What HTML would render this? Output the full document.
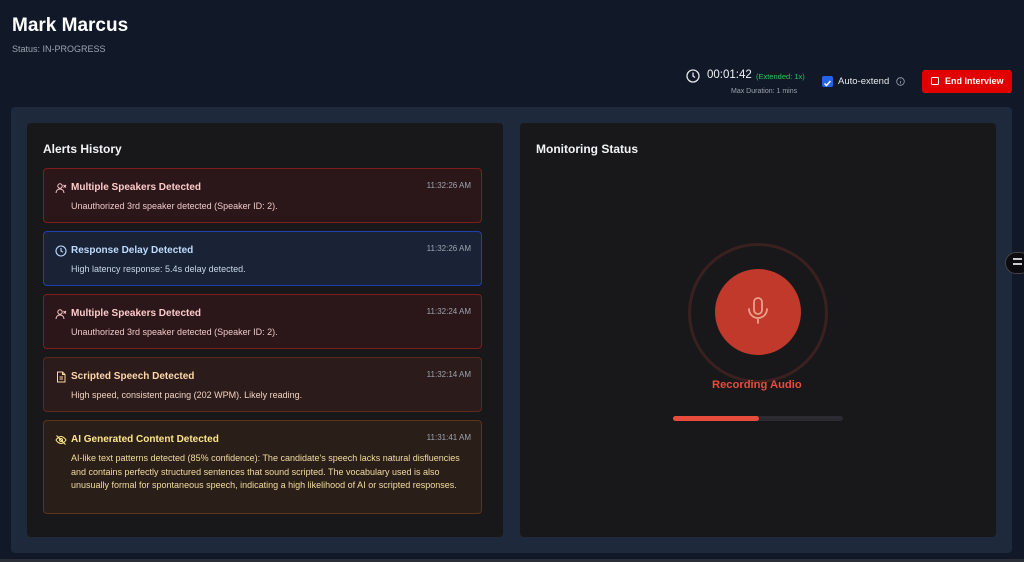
<!DOCTYPE html>
<html><head><meta charset="utf-8"><style>
*{box-sizing:border-box;margin:0;padding:0}
body{width:1024px;height:562px;background:#111827;font-family:"Liberation Sans",sans-serif;position:relative;overflow:hidden;color:#e5e7eb}
.abs{position:absolute}
h1{position:absolute;left:12px;top:15px;font-size:19px;font-weight:700;color:#fff}
.status{left:12px;top:44px;font-size:9px;color:#9ca3af}
.outer{left:11px;top:107px;width:1001px;height:446px;background:#1e293b;border-radius:4px}
.panel{background:#18181b;border-radius:4px;top:123px;height:414px}
.ptitle{position:absolute;left:16px;top:19px;font-size:12px;font-weight:700;color:#f3f4f6}
.card{position:absolute;left:16px;width:439px;border-radius:4px;border:1px solid}
.card .t{position:absolute;left:27px;top:13px;font-size:10px;font-weight:700}
.card .d{position:absolute;left:27px;top:31px;font-size:9px;line-height:13.5px;width:405px}
.card .tm{position:absolute;right:10px;top:12px;font-size:8px;color:#9ca3af}
.card svg{position:absolute;left:11px;top:13px}
.red{background:#2b1719;border-color:#7f1d1d}
.red .t{color:#fecaca}.red .d{color:#f0c8c8}
.blue{background:#1a2236;border-color:#1e40af}
.blue .t{color:#bfdbfe}.blue .d{color:#c9d6ea}
.org{background:#2b1b1a;border-color:#5c2a1c}
.org .t{color:#fed7aa}.org .d{color:#f0d2c0}
.yel{background:#2a1e19;border-color:#5c3418}
.yel .t{color:#fde68a}.yel .d{color:#f2dca0}
</style></head><body>
<h1>Mark Marcus</h1>
<div class="abs status">Status: IN-PROGRESS</div>
<svg class="abs" style="left:686px;top:69px" width="14" height="14" viewBox="0 0 14 14" fill="none" stroke="#e5e7eb" stroke-width="1.3"><circle cx="7" cy="7" r="6"/><path d="M7 3.5V7l2 1.5"/></svg>
<div class="abs" style="left:707px;top:69px;font-size:11.5px;color:#f3f4f6">00:01:42</div>
<div class="abs" style="left:756px;top:72px;font-size:7.5px;color:#22c55e">(Extended: 1x)</div>
<div class="abs" style="left:731px;top:88px;font-size:7px;color:#9ca3af">Max Duration: 1 mins</div>
<div class="abs" style="left:822px;top:76px;width:11px;height:11px;background:#2563eb;border-radius:2px"><svg width="11" height="11" viewBox="0 0 11 11"><path d="M2.5 5.5l2 2 4-4.5" stroke="#fff" stroke-width="1.5" fill="none"/></svg></div>
<div class="abs" style="left:838px;top:76px;font-size:9.5px;color:#e5e7eb">Auto-extend</div>
<svg class="abs" style="left:896px;top:77px" width="9" height="9" viewBox="0 0 9 9" fill="none" stroke="#9ca3af" stroke-width=".8"><circle cx="4.5" cy="4.5" r="3.8"/><path d="M4.5 4v2.5M4.5 2.6v.4"/></svg>
<div class="abs" style="left:922px;top:70px;width:90px;height:23px;background:#e00000;border-radius:3px"><div class="abs" style="left:9px;top:7px;width:8px;height:8px;border:1px solid #fff;border-radius:1.5px"></div><div class="abs" style="left:23px;top:6px;font-size:9px;font-weight:700;color:#fff">End Interview</div></div>
<div class="abs outer"></div>
<div class="abs panel" style="left:27px;width:476px">
<div class="ptitle">Alerts History</div>
<div class="card red" style="top:45px;height:55px"><svg width="12" height="12" viewBox="0 0 12 12" fill="none" stroke="#fecaca" stroke-width="1"><circle cx="5" cy="4" r="2.2"/><path d="M1 11c0-2.5 1.8-4 4-4s4 1.5 4 4M8.5 3l2.5 2.5M11 3L8.5 5.5"/></svg><div class="t">Multiple Speakers Detected</div><div class="tm">11:32:26 AM</div><div class="d">Unauthorized 3rd speaker detected (Speaker ID: 2).</div></div>
<div class="card blue" style="top:108px;height:55px"><svg width="12" height="12" viewBox="0 0 12 12" fill="none" stroke="#bfdbfe" stroke-width="1.1"><circle cx="6" cy="6" r="5"/><path d="M6 3v3l2 1.2"/></svg><div class="t">Response Delay Detected</div><div class="tm">11:32:26 AM</div><div class="d">High latency response: 5.4s delay detected.</div></div>
<div class="card red" style="top:171px;height:55px"><svg width="12" height="12" viewBox="0 0 12 12" fill="none" stroke="#fecaca" stroke-width="1"><circle cx="5" cy="4" r="2.2"/><path d="M1 11c0-2.5 1.8-4 4-4s4 1.5 4 4M8.5 3l2.5 2.5M11 3L8.5 5.5"/></svg><div class="t">Multiple Speakers Detected</div><div class="tm">11:32:24 AM</div><div class="d">Unauthorized 3rd speaker detected (Speaker ID: 2).</div></div>
<div class="card org" style="top:234px;height:55px"><svg width="12" height="12" viewBox="0 0 12 12" fill="none" stroke="#fed7aa" stroke-width="1"><path d="M2.5 1h5l2.5 2.5V11h-7.5zM7.5 1v2.5H10M4.5 6h3.5M4.5 8h3.5"/></svg><div class="t">Scripted Speech Detected</div><div class="tm">11:32:14 AM</div><div class="d">High speed, consistent pacing (202 WPM). Likely reading.</div></div>
<div class="card yel" style="top:297px;height:94px"><svg width="12" height="12" viewBox="0 0 12 12" fill="none" stroke="#fde68a" stroke-width="1"><path d="M1 6s2-3.5 5-3.5S11 6 11 6s-2 3.5-5 3.5S1 6 1 6zM1.5 1.5l9 9"/><circle cx="6" cy="6" r="1.5"/></svg><div class="t">AI Generated Content Detected</div><div class="tm">11:31:41 AM</div><div class="d">AI-like text patterns detected (85% confidence): The candidate's speech lacks natural disfluencies and contains perfectly structured sentences that sound scripted. The vocabulary used is also unusually formal for spontaneous speech, indicating a high likelihood of AI or scripted responses.</div></div>
</div>
<div class="abs panel" style="left:520px;width:476px">
<div class="ptitle">Monitoring Status</div>
</div>
<div class="abs" style="left:688px;top:243px;width:140px;height:140px;border-radius:50%;border:3px solid #3a201f"></div>
<div class="abs" style="left:715px;top:269px;width:86px;height:86px;border-radius:50%;background:#c0392b"></div>
<svg class="abs" style="left:746px;top:297px" width="24" height="30" viewBox="0 0 24 30" fill="none" stroke="#e8a08a" stroke-width="1.8" stroke-linecap="round"><rect x="8" y="1" width="8" height="16" rx="4"/><path d="M3 12a9 9 0 0 0 18 0M12 21v5"/></svg>
<div class="abs" style="left:712px;top:379px;font-size:11.2px;font-weight:700;color:#e74c3c">Recording Audio</div>
<div class="abs" style="left:673px;top:416px;width:170px;height:5px;border-radius:3px;background:#2a2a30"><div style="width:86px;height:5px;border-radius:3px;background:#e74c3c"></div></div>
<div class="abs" style="left:1005px;top:252px;width:26px;height:22px;border-radius:11px;background:#0b0b10;border:1px solid #444"><div class="abs" style="left:7px;top:5px;width:9px;height:2px;background:#ccc"></div><div class="abs" style="left:7px;top:10px;width:9px;height:2px;background:#ccc"></div></div>
<div class="abs" style="left:0;top:559px;width:1024px;height:3px;background:#2a2f38"></div>
</body></html>
